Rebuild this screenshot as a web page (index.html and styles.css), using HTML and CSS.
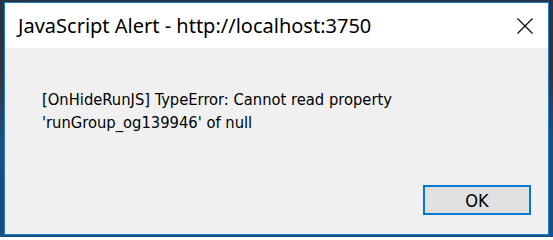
FILE: index.html
```html
<!DOCTYPE html>
<html>
<head>
<meta charset="utf-8">
<link rel="stylesheet" href="styles.css">
</head>
<body>
<div class="desktop">
  <div class="dialog">
    <div class="titlebar">
      <span class="title">JavaScript Alert - http://localhost:3750</span>
      <svg class="close" width="16" height="16" viewBox="0 0 16 16"><path d="M0.5 0.5 L15.5 15.5 M15.5 0.5 L0.5 15.5" stroke="#000" stroke-width="1.1" fill="none"/></svg>
    </div>
    <div class="content">
      <p class="message">[OnHideRunJS] TypeError: Cannot read property<br>'runGroup_og139946' of null</p>
      <div class="actions">
        <button class="ok">OK</button>
      </div>
    </div>
  </div>
</div>
</body>
</html>
```

FILE: styles.css
```css
html, body {
  margin: 0;
  padding: 0;
  width: 553px;
  height: 237px;
  overflow: hidden;
}
.desktop {
  width: 553px;
  height: 237px;
  box-sizing: border-box;
  padding: 2px 4px 2px 4px;
  background: linear-gradient(180deg, #2a3442 0%, #3b3038 30%, #1c4f80 60%, #1a4d80 100%);
}
.dialog {
  width: 545px;
  height: 233px;
  box-sizing: border-box;
  border: 1px solid #1a80d4;
  background: #f0f0f0;
  display: flex;
  flex-direction: column;
}
.titlebar {
  height: 45px;
  background: #ffffff;
  display: flex;
  align-items: center;
  justify-content: space-between;
  padding: 0 15px 0 13px;
}
.title {
  font-family: "Noto Sans", "Open Sans", sans-serif;
  font-size: 20px;
  color: #000;
  margin-top: -1px;
}
.close {
  display: block;
}
.content {
  flex: 1;
  display: flex;
  flex-direction: column;
  padding: 0 17px 0 37px;
}
.message {
  margin: 40px 0 0 0;
  font-family: "DejaVu Sans Condensed", "DejaVu Sans", sans-serif;
  font-size: 16.4px;
  line-height: 23px;
  color: #000;
}
.actions {
  margin-top: auto;
  margin-bottom: 19px;
  display: flex;
  justify-content: flex-end;
}
.ok {
  width: 108px;
  height: 30px;
  box-sizing: border-box;
  border: 2px solid #0078d7;
  background: #e1e1e1;
  font-family: "DejaVu Sans Condensed", "DejaVu Sans", sans-serif;
  font-size: 18px;
  color: #000;
  padding: 0;
}
```
